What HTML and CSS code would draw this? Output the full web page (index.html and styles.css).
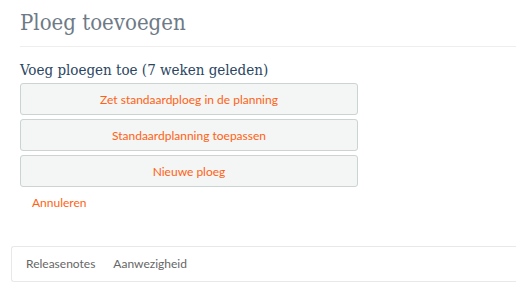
FILE: index.html
```html
<html lang="nl">
<head>
  <meta charset="UTF-8">
  <title>Ploeg toevoegen</title>
  <link rel="stylesheet" href="styles.css">
</head>
<body>

  <div class="page">
    <h1 class="title">Ploeg toevoegen</h1>

    <div class="content">
      <h2 class="subtitle">Voeg ploegen toe (7 weken geleden)</h2>

      <div class="actions">
        <button class="action">Zet standaardploeg in de planning</button>
        <button class="action">Standaardplanning toepassen</button>
        <button class="action">Nieuwe ploeg</button>
      </div>

      <a class="cancel" href="#">Annuleren</a>
    </div>
  </div>

  <div class="footer">
    <a href="#">Releasenotes</a>
    <a href="#">Aanwezigheid</a>
  </div>

</body>
</html>
```

FILE: styles.css
```css
body {
  margin: 0;
  background: #fff;
  font-family: 'Lato', sans-serif;
  overflow: hidden;
}

.page {
  padding-left: 20px;
}

.title {
  margin: 0;
  padding: 9px 0 9px;
  font-family: 'DejaVu Serif', serif;
  font-stretch: condensed;
  font-weight: normal;
  font-size: 22px;
  line-height: 28px;
  color: #6e7a86;
  border-bottom: 1px solid #eee;
}

.content {
  padding-top: 13px;
}

.subtitle {
  margin: 0 0 3px;
  font-family: 'DejaVu Serif', serif;
  font-stretch: condensed;
  font-weight: normal;
  font-size: 15px;
  line-height: 20px;
  color: #2b4663;
}

.actions {
  display: flex;
  flex-direction: column;
  gap: 4px;
  width: 338px;
}

.action {
  height: 32px;
  background: #f4f5f5;
  border: 1px solid #ccd3d3;
  border-radius: 3px;
  color: #ff6213;
  font-family: 'Lato', sans-serif;
  font-size: 12px;
  cursor: pointer;
}

.cancel {
  display: inline-block;
  margin: 8px 0 0 12px;
  font-size: 12px;
  line-height: 16px;
  color: #ff6213;
  text-decoration: none;
}

.footer {
  display: flex;
  gap: 18px;
  margin: 35px 0 0 11px;
  padding: 9px 14px;
  border: 1px solid #e8e8e8;
  border-right: none;
  border-radius: 3px 0 0 3px;
  height: 16px;
  line-height: 16px;
}

.footer a {
  font-size: 12px;
  color: #666;
  text-decoration: none;
}
```
